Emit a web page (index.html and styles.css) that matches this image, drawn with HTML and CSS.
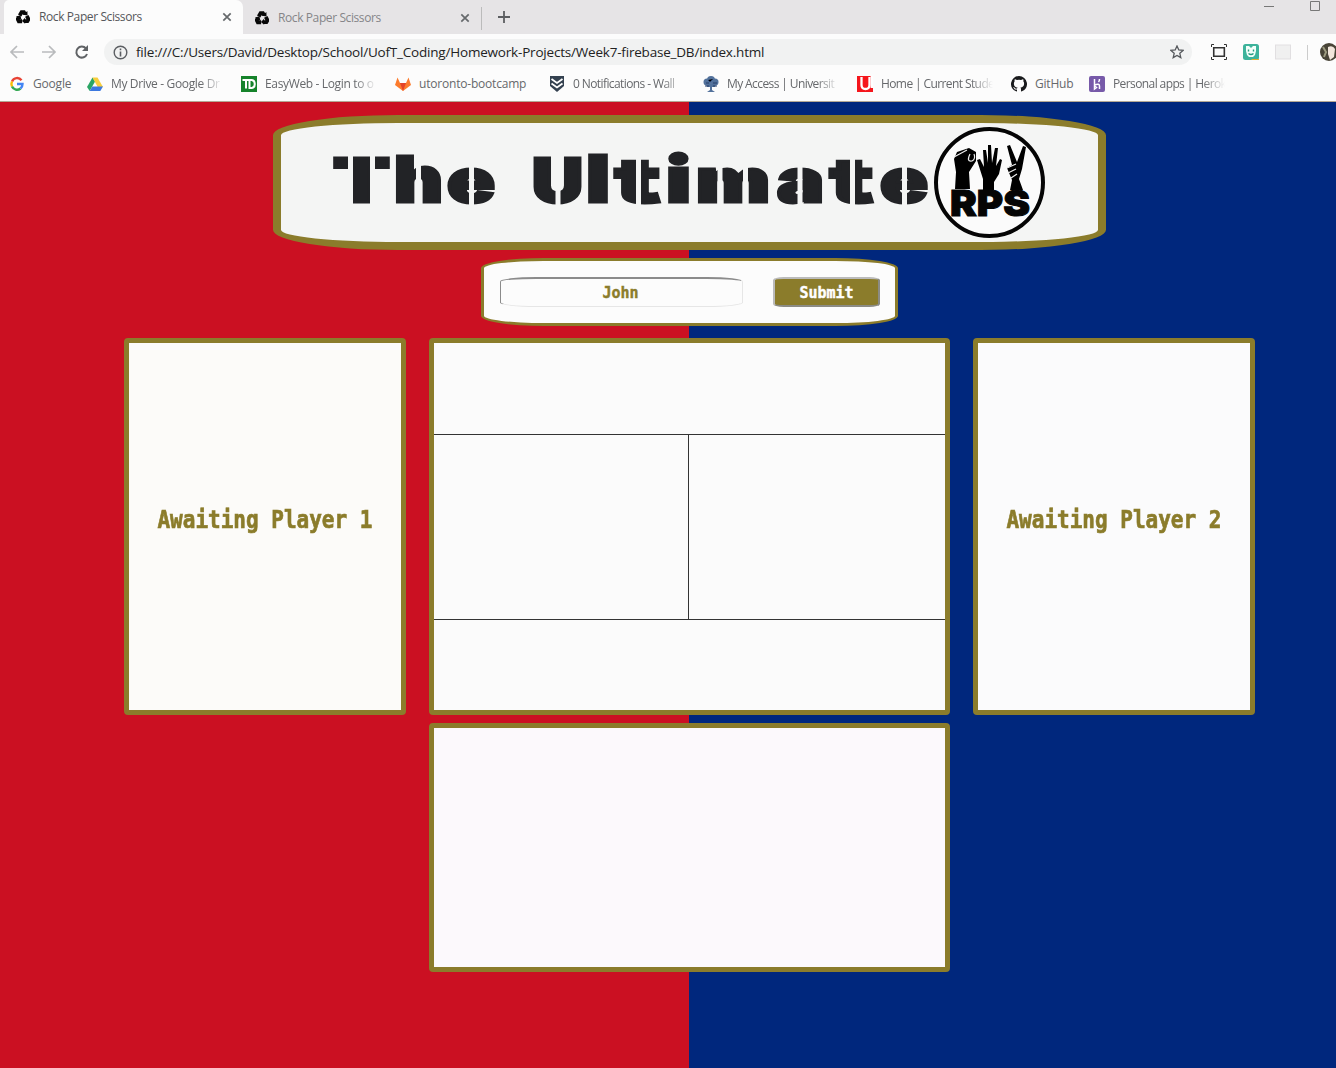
FILE: index.html
```html
<!DOCTYPE html>
<html lang="en">
<head>
<meta charset="utf-8">
<title>Rock Paper Scissors</title>
<link rel="stylesheet" href="styles.css">
</head>
<body>
<svg class="defs" width="0" height="0"><defs>
<symbol id="recycle" viewBox="0 0 16 16"><g fill="none" stroke="#080808" stroke-width="4.400"><path d="M4.200 6.300L6.400 2.600H9l1.200 2M12.300 6.800l2 3.700-1.300 2.200h-3M7 12.800H3.200L1.900 10.400l1.200-2.200"/></g><path fill="#080808" d="M8 5.400l5.200 1-.2-5.200zM10.400 8.800v6.900L6.800 12.600zM0 7.300l5-1.200 1.300 5z"/></symbol>
<symbol id="close" viewBox="0 0 10 10"><path d="M1.300 1.300l7.400 7.400M8.700 1.300L1.300 8.700" stroke="#66696c" stroke-width="1.700"/></symbol>
</defs></svg>
<header class="browser">
  <div class="tabs">
    <div class="tab active"><svg class="fav"><use href="#recycle"/></svg><span>Rock Paper Scissors</span><svg class="close"><use href="#close"/></svg></div>
    <div class="tab"><svg class="fav"><use href="#recycle"/></svg><span>Rock Paper Scissors</span><svg class="close"><use href="#close"/></svg></div>
    <svg class="plus" width="12" height="12"><path d="M6 0v12M0 6h12" stroke="#5c5e61" stroke-width="1.800"/></svg>
    <svg class="window" width="60" height="14"><path d="M1 6.500h10" stroke="#777"/><path d="M47.500 1.500h9v9h-9z" fill="none" stroke="#777"/></svg>
  </div>
  <div class="toolbar">
    <svg class="nav" width="84" height="18"><g fill="none" stroke-width="1.700"><path d="M16 9H3M9 3L3 9l6 6M34 9h13M41 3l6 6-6 6" stroke="#b9bbbd"/><path d="M78 5.500A5.500 5.500 0 1 0 79 11" stroke="#606366" stroke-width="2"/></g><path d="M80 2v6h-6z" fill="#606366"/></svg>
    <div class="address">
      <svg width="15" height="15"><circle cx="7.500" cy="7.500" r="6.300" fill="none" stroke="#5b5e62" stroke-width="1.400"/><path d="M7.500 6.500v5M7.500 3.500v1.800" stroke="#5b5e62" stroke-width="1.600"/></svg>
      <span>file:///C:/Users/David/Desktop/School/UofT_Coding/Homework-Projects/Week7-firebase_DB/index.html</span>
      <svg class="star" width="14" height="14" viewBox="0 0 14 14"><path d="M7 1l1.800 4 4.300.4-3.300 2.900 1 4.300L7 10.400l-3.800 2.200 1-4.300L.9 5.400 5.200 5z" fill="none" stroke="#55585c" stroke-width="1.300"/></svg>
    </div>
    <svg class="extensions" width="126" height="22" viewBox="0 0 126 22"><g fill="none" stroke="#333" stroke-width="1.400"><path d="M4 6.700h10v8.600H4z" transform="translate(-.5 0) scale(1.060 1)" stroke-width="1.500"/><path d="M1.500 6V3.500H4M14 3.500h2.500V6M1.500 16v2.500H4M14 18.500h2.500V16" stroke-width="1"/></g><rect x="33" y="3" width="16" height="16" rx="2.500" fill="#3db39b"/><path d="M36 5h3l2 2 2-2h3v5l-1 4-2 2h-4l-2-2-1-4z" fill="#f3fffa"/><path d="M38.500 8.500v2M43.500 8.500v2M38.500 12.500q2.500 2 5 0" stroke="#269b80" stroke-width="1.400" fill="none"/><path d="M41 18h8v1h-7z" fill="#e7ad2d"/><rect x="65.500" y="4" width="15" height="14" fill="#f0f0f0" stroke="#e1dfe1"/><path d="M97.500 4v15" stroke="#ccc"/><circle cx="119" cy="11" r="9" fill="#484437"/><path d="M118 6q5-2 7 2l-1 8-4 3-2-6z" fill="#f1e6dc"/><path d="M113 6l3 5-2 5" stroke="#9d9b80" stroke-width="2" fill="none"/></svg>
  </div>
  <nav class="bookmarks">
    <a class="b1"><svg viewBox="0 0 16 16" fill="none" stroke-width="2.400"><path d="M12.500 4.300A5.500 5.500 0 0 0 3 5.500" stroke="#e84335"/><path d="M3 5.500a5.500 5.500 0 0 0 0 5" stroke="#fbbc05"/><path d="M3 10.500a5.500 5.500 0 0 0 8.500 2" stroke="#34a853"/><path d="M8 8h5.500q0 3-2 4.500" stroke="#4285f4"/></svg><span>Google</span></a>
    <a class="b2"><svg viewBox="0 0 16 16"><path d="M5.500 1.500L0 11l2.700 4L8 5.500z" fill="#2aa564"/><path d="M5.500 1.500h5L16 11h-5.300z" fill="#f8ce3d"/><path d="M5.300 10.500H16L13.300 15H2.700z" fill="#3c78df"/></svg><span class="fade">My Drive - Google Dr</span></a>
    <a class="b3"><svg viewBox="0 0 16 16"><path d="M0 0h16v16H0z" fill="#16832b"/><path d="M1.500 4h7M5 4v8.500M8.500 4v8h2.300q3-.5 3-4t-3-4z" stroke="#fff" stroke-width="2" fill="none"/></svg><span class="fade">EasyWeb - Login to o</span></a>
    <a class="b4"><svg viewBox="0 0 16 16"><path d="M8 15L0 9l2.500-7.500L5 7h6l2.500-5.500L16 9z" fill="#fc7b2c"/><path d="M5 7h6l-3 8z" fill="#e34327"/></svg><span>utoronto-bootcamp</span></a>
    <a class="b5"><svg viewBox="0 0 16 16"><path d="M1 0h14v10l-7 6-7-6z" fill="#344150"/><path d="M2.500 3L8 7l5.500-4M2.500 7.500l5.500 4 5.500-4" fill="none" stroke="#fff" stroke-width="1.800"/></svg><span class="fade">0 Notifications - Wall</span></a>
    <a class="b6"><svg viewBox="0 0 16 16"><g fill="#52719b"><circle cx="8" cy="4" r="4"/><circle cx="4" cy="6" r="3.500"/><circle cx="12" cy="6" r="3.500"/><path d="M3 8h10l-1 3H9v3l3 2H4l3-2v-3H4z"/></g><path d="M2 10h4M10 10h4M5 4l2 2 3-3M3 7h3M10 7h4" stroke="#263f69"/></svg><span class="fade">My Access | Universit</span></a>
    <a class="b7"><svg viewBox="0 0 16 16"><path d="M0 0h16v16H0z" fill="#f5161c"/><path d="M4.500 1v8q0 4 4 4t4-4V1" fill="none" stroke="#fff" stroke-width="2.300"/><path d="M13.600 0H16v12h-2.400z" fill="#fff"/></svg><span class="fade">Home | Current Stude</span></a>
    <a class="b8"><svg viewBox="0 0 16 16"><path fill="#191a1c" d="M8 0a8 8 0 0 0-2.500 15.600c.4.100.5-.2.500-.5v-1.500c-2.200.5-2.700-.9-2.700-.9-.4-.9-.9-1.200-.9-1.200-.7-.5.100-.5.100-.5.800.1 1.200.8 1.200.8.700 1.200 1.900.9 2.300.7.100-.5.300-.9.500-1.100-1.800-.2-3.600-.9-3.600-4 0-.9.300-1.600.8-2.100-.1-.2-.4-1 .1-2.100 0 0 .7-.2 2.200.8a8 8 0 0 1 4 0c1.500-1 2.200-.8 2.200-.8.400 1.100.2 1.900.1 2.100.5.600.8 1.300.8 2.100 0 3.100-1.900 3.800-3.700 4 .3.300.6.800.6 1.500v2.200c0 .3.100.6.500.5A8 8 0 0 0 8 0z"/></svg><span>GitHub</span></a>
    <a class="b9"><svg viewBox="0 0 16 16"><rect width="16" height="16" rx="2" fill="#775aa9"/><path d="M5.500 3v6q5-2 5 1v3M10.500 3q0 2-1 3M5.500 10v3l2-1.500z" stroke="#fff" stroke-width="1.500" fill="none"/></svg><span class="fade">Personal apps | Herok</span></a>
  </nav>
</header>
<main>
  <h1 class="banner">
    <svg width="817" height="119" viewBox="281 123 817 119">
      <g class="title">
        <text x="333" y="201.500" textLength="57" lengthAdjust="spacingAndGlyphs">T</text><text class="tall" x="394" y="201.500" textLength="49" lengthAdjust="spacingAndGlyphs">h</text><text x="447" y="201.500" textLength="48" lengthAdjust="spacingAndGlyphs">e</text>
        <text x="532" y="201.500" textLength="51" lengthAdjust="spacingAndGlyphs">U</text><text class="tall l" x="586" y="201.500" textLength="24" lengthAdjust="spacingAndGlyphs">l</text><text x="615" y="201.500" textLength="45" lengthAdjust="spacingAndGlyphs">t</text><text class="tall" x="666" y="201.500" textLength="25" lengthAdjust="spacingAndGlyphs">i</text><text x="696" y="201.500" textLength="74" lengthAdjust="spacingAndGlyphs">m</text><text x="777" y="201.500" textLength="47" lengthAdjust="spacingAndGlyphs">a</text><text x="830" y="201.500" textLength="43" lengthAdjust="spacingAndGlyphs">t</text><text x="880" y="201.500" textLength="48" lengthAdjust="spacingAndGlyphs">e</text>
      </g>
      <path class="cuts" d="M350.500 150v58M372.500 150v58M418.500 164v45M471.500 164v45M558 150v58M638.500 150v58M720 164v45M745.500 164v45M800 164v45M852.500 150v58M904.500 164v45"/>
      <circle cx="989.500" cy="182.500" r="53.500" fill="#fbfbfb" stroke="#050505" stroke-width="4"/>
      <path d="M955 189l1-17-2-13 3-7 12-4 7 4v9l-7 11 1 17zM983 190v-11l-6-19 3-1 4 8-1-17h3l2 13 0-18h3l1 18 3-15h3l-2 18 4-7 2 1-3 14-5 8v8zM1010 190l2-10-5-12 5-3-5-19 3-1 7 17 6-16 3 1-4 22-3 10 4 11z"/>
      <path d="M954 157l13-7M970 154q-4 8 2 7 4-2 2-7M1007 168l9-4M1008 173l8-4M1011 178l6-4" fill="none" stroke="#eee" stroke-width="1.200"/>
      <text class="rps" x="950" y="216" textLength="80" lengthAdjust="spacingAndGlyphs">RPS</text>
    </svg>
  </h1>
  <form class="entry"><input value="John" aria-label="Player name"><button type="button"><span>Submit</span></button></form>
  <section class="game">
    <div class="panel player"><h2>Awaiting Player 1</h2></div>
    <div class="panel board"><div></div><div class="choices"><i></i><i></i></div><div></div></div>
    <div class="panel player"><h2>Awaiting Player 2</h2></div>
    <div class="panel chat"></div>
  </section>
</main>
</body>
</html>
```
FILE: styles.css
```css
* { box-sizing: border-box; }
body { margin: 0; width: 1336px; height: 1068px; overflow: hidden; font-family: "Open Sans", sans-serif; }
svg { display: block; flex: none; }
.defs { position: absolute; }
.browser { height: 102px; background: #fcfcfc; border-bottom: 1px solid #b5a894; color: #66686b; }
.tabs { height: 34px; background: #e6e4e6; display: flex; }
.tab { width: 239px; height: 34px; padding: 0 11px 0 12px; display: flex; align-items: center; font-size: 12px; color: #858588; }
.tab.active { margin-left: 4px; background: #fcfcfc; color: #55575a; border-radius: 5px 7px 0 0; }
.tab:nth-child(2) { border-right: 1px solid #bbb; height: 23px; margin-top: 7px; padding-bottom: 2px; }
.fav { width: 14px; height: 14px; margin-right: 9px; }
.tab span { letter-spacing: -.4px; white-space: nowrap; padding-bottom: 1px; }
.close { width: 10px; height: 10px; margin-left: auto; }
.plus { margin: 11px 0 0 16px; }
.window { margin-left: auto; margin-right: 13px; }
.toolbar { height: 36px; display: flex; align-items: center; }
.nav { margin-left: 8px; }
.address { margin-left: 12px; width: 1088px; height: 26px; border-radius: 13px; background: #f1f2f2; display: flex; align-items: center; padding: 0 8px 0 9px; color: #222; font-size: 13.5px; }
.address span { margin-left: 8px; letter-spacing: -.2px; white-space: nowrap; padding-bottom: 1px; }
.star { margin-left: auto; }
.extensions { margin-left: 18px; }
.bookmarks { height: 28px; display: flex; padding-left: 9px; font-size: 12px; }
.bookmarks a { display: flex; align-items: center; width: 78px; flex: none; letter-spacing: -.2px; white-space: nowrap; }
.bookmarks svg { width: 16px; height: 16px; margin-right: 8px; }
.bookmarks span { padding-bottom: 1px; }
.bookmarks .fade { width: 112px; letter-spacing: -.35px; -webkit-mask-image: linear-gradient(90deg, #000 80%, transparent); mask-image: linear-gradient(90deg, #000 80%, transparent); }
.bookmarks .b2, .bookmarks .b3, .bookmarks .b4, .bookmarks .b5, .bookmarks .b6, .bookmarks .b7, .bookmarks .b9 { width: 154px; }
.bookmarks .b5 .fade, .bookmarks .b6 .fade, .bookmarks .b7 .fade, .bookmarks .b9 .fade { letter-spacing: -.6px; }
main { width: 1379px; height: 966px; padding-top: 13px; background: linear-gradient(90deg, #cb1022 689px, #00277d 689px); }
.banner { width: 833px; height: 135px; margin: 0 auto; border: 8px solid #8b7c2b; border-radius: 15%; background: #f4f5f4; overflow: hidden; }
.title { font: 900 60px Inter, sans-serif; fill: #222326; stroke: #222326; stroke-width: 3px; }
.title .tall { font-size: 63px; }
.title .l { font-size: 65px; }
.cuts { stroke: #f4f5f4; stroke-width: 5px; fill: none; }
.rps { font: 900 36px Inter, sans-serif; fill: #050505; stroke: #050505; stroke-width: 1px; }
.entry { width: 417px; height: 68px; margin: 8px auto 12px; border: 3px solid #8b7c2b; border-radius: 15%; background: #fcfcfc; display: flex; align-items: center; padding: 0 15px 0 16px; justify-content: space-between; }
.entry input { width: 243px; height: 30px; border: 1px solid; border-color: #8b8b8b #e6e6e6 #e6e6e6 #8b8b8b; border-top-width: 2px; border-radius: 15%; padding: 0; text-align: center; text-indent: -2px; color: #8b7c2b; font: bold 15px "DejaVu Sans Mono", monospace; background: #fcfcfc; -webkit-text-stroke: .4px #8b7c2b; }
.entry button { width: 107px; height: 30px; border: 2px solid; border-color: #bbb #8b8b84 #8b8b84 #bbb; border-radius: 10%; background: #8b7c2b; color: #fff; font: bold 15px "DejaVu Sans Mono", monospace; padding: 1px 0 0; -webkit-text-stroke: .4px #fff; }
.game { display: grid; grid-template: 377px 249px / 282px 521px 282px; gap: 8px 23px; margin-left: 124px; }
.panel { background: #fbfbfb; border: 5px solid #8b7c2b; border-radius: 4px; }
.player { display: flex; align-items: center; justify-content: center; background: #fcfbf9; }
.player:nth-child(3) { background: #fbfbfc; }
h2 { margin: 0 0 14px; color: #8b7c2b; font: bold 25px/32px "DejaVu Sans Mono", monospace; white-space: nowrap; transform: scaleX(.84); -webkit-text-stroke: .7px #8b7c2b; }
.board { display: grid; grid-template-rows: 91px 186px 1fr; }
.choices { display: grid; grid-template-columns: 254px 1fr; border: solid #333; border-width: 1px 0; }
.choices i + i { border-left: 1px solid #333; }
.chat { grid-column: 2; background: #fcf9fc; }
```
